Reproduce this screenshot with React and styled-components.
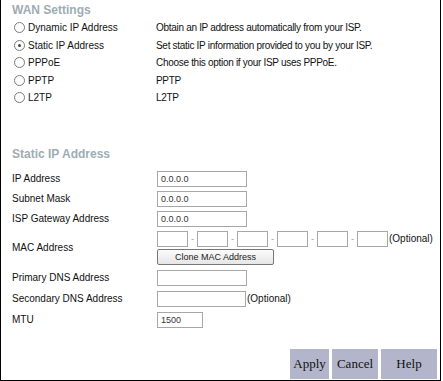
import React from 'react'
import styled, { createGlobalStyle } from 'styled-components'

const Global = createGlobalStyle`
  body {
    margin: 0;
    background: #fff;
    font-family: "Liberation Sans", Arial, sans-serif;
    font-size: 10px;
    color: #111;
  }
`

const Frame = styled.div`
  width: 428px;
  height: 377px;
  border-left: 1px solid #000;
  border-right: 1px solid #000;
  border-bottom: 1px solid #000;
  display: flex;
  flex-direction: column;
  padding: 3px 0 0 11px;
  box-sizing: content-box;
`

const Title = styled.div`
  font-weight: bold;
  font-size: 12px;
  line-height: 14px;
  color: #9eacb4;
  margin: ${p => p.$top || 0}px 0 ${p => p.$bottom || 2}px 0;
`

const OptionRow = styled.div`
  display: grid;
  grid-template-columns: 144px 1fr;
  align-items: center;
  height: 17.5px;
`

const RadioLabel = styled.label`
  display: flex;
  align-items: center;
  gap: 3px;
  padding-left: 2px;
`

const Desc = styled.span`
  letter-spacing: -0.3px;
`

const Radio = styled.span`
  width: 9px;
  height: 9px;
  border-radius: 50%;
  border: 1px solid #7a7a7a;
  background: #fff;
  display: flex;
  align-items: center;
  justify-content: center;
  &::after {
    content: '';
    width: 3px;
    height: 3px;
    border-radius: 50%;
    background: ${p => (p.$checked ? '#444' : 'transparent')};
  }
`

const FieldRow = styled.div`
  display: grid;
  grid-template-columns: 145px 1fr;
  align-items: center;
  min-height: 16px;
  margin-bottom: ${p => p.$gap ?? 4}px;
`

const Fields = styled.div`
  display: flex;
  flex-direction: column;
  gap: 2px;
`

const Line = styled.div`
  display: flex;
  align-items: center;
`

const Box = styled.div`
  width: ${p => p.$w}px;
  height: 14px;
  border: 1px solid #a7a7a7;
  font-size: 9px;
  line-height: 14px;
  padding-left: 3px;
  box-sizing: content-box;
  color: #333;
`

const Dash = styled.span`
  width: 9px;
  text-align: center;
  color: #999;
  font-size: 9px;
`

const Hint = styled.span`
  font-size: 10px;
  margin-left: 1px;
`

const CloneBtn = styled.div`
  width: 115px;
  height: 14px;
  border: 1px solid #777;
  border-radius: 2px;
  background: linear-gradient(#fbfbfb, #e6e6e6);
  font-size: 9px;
  line-height: 14px;
  text-align: center;
  color: #222;
`

const Footer = styled.div`
  margin-top: auto;
  margin-bottom: 1px;
  display: flex;
  justify-content: flex-end;
  gap: 3px;
  padding-right: 3px;
`

const ActionBtn = styled.div`
  width: ${p => p.$w}px;
  height: 30px;
  background: #b3b6cb;
  font-family: "Liberation Serif", "Times New Roman", serif;
  font-size: 13px;
  line-height: 30px;
  text-align: center;
  color: #111;
`

const options = [
  ['Dynamic IP Address', 'Obtain an IP address automatically from your ISP.'],
  ['Static IP Address', 'Set static IP information provided to you by your ISP.', true],
  ['PPPoE', 'Choose this option if your ISP uses PPPoE.'],
  ['PPTP', 'PPTP'],
  ['L2TP', 'L2TP'],
]

export default function App() {
  return (
    <>
      <Global />
      <Frame>
        <Title>WAN Settings</Title>
        {options.map(([name, desc, checked]) => (
          <OptionRow key={name}>
            <RadioLabel>
              <Radio $checked={checked} />
              {name}
            </RadioLabel>
            <Desc>{desc}</Desc>
          </OptionRow>
        ))}

        <Title $top={40} $bottom={10}>Static IP Address</Title>
        <FieldRow>
          <span>IP Address</span>
          <Box $w={85}>0.0.0.0</Box>
        </FieldRow>
        <FieldRow>
          <span>Subnet Mask</span>
          <Box $w={85}>0.0.0.0</Box>
        </FieldRow>
        <FieldRow>
          <span>ISP Gateway Address</span>
          <Box $w={85}>0.0.0.0</Box>
        </FieldRow>
        <FieldRow $gap={5}>
          <span>MAC Address</span>
          <Fields>
            <Line>
              {[0, 1, 2, 3, 4, 5].map(i => (
                <React.Fragment key={i}>
                  {i > 0 && <Dash>-</Dash>}
                  <Box $w={26} />
                </React.Fragment>
              ))}
              <Hint>(Optional)</Hint>
            </Line>
            <CloneBtn>Clone MAC Address</CloneBtn>
          </Fields>
        </FieldRow>
        <FieldRow $gap={5}>
          <span>Primary DNS Address</span>
          <Box $w={85} />
        </FieldRow>
        <FieldRow $gap={5}>
          <span>Secondary DNS Address</span>
          <Line>
            <Box $w={84} />
            <Hint>(Optional)</Hint>
          </Line>
        </FieldRow>
        <FieldRow>
          <span>MTU</span>
          <Box $w={41}>1500</Box>
        </FieldRow>

        <Footer>
          <ActionBtn $w={39}>Apply</ActionBtn>
          <ActionBtn $w={46}>Cancel</ActionBtn>
          <ActionBtn $w={56}>Help</ActionBtn>
        </Footer>
      </Frame>
    </>
  )
}
